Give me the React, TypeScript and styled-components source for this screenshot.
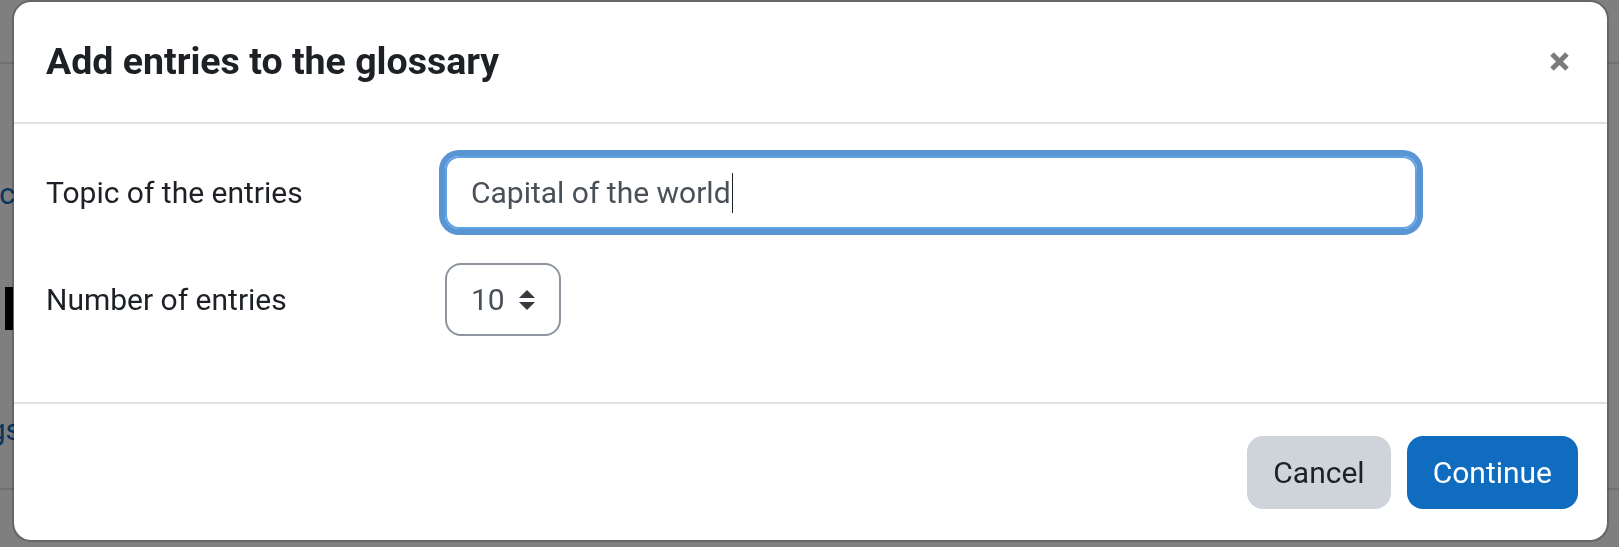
import styled, { createGlobalStyle } from 'styled-components'
import { FC } from 'react'

const GlobalStyle = createGlobalStyle`
  html, body {
    margin: 0;
    padding: 0;
  }
  body {
    width: 1619px;
    height: 547px;
    overflow: hidden;
    background: #fff;
    font-family: Roboto, "Liberation Sans", sans-serif;
    color: #1d2125;
  }
`

// page behind the backdrop, only its edges peek out
const Page = styled.div`
  display: flex;
  flex-direction: column;
  height: 547px;
`

const TopBar = styled.div`
  height: 62px;
  border-bottom: 2px solid #dee2e6;
`

const Middle = styled.div`
  display: flex;
  height: 424px;
`

const SideEdge = styled.div`
  width: 21px;
  overflow: hidden;
  display: flex;
  flex-direction: column;
  align-items: flex-end;
  padding-top: 107px;
`

const PageLink = styled.span<{ $inset?: number }>`
  white-space: nowrap;
  margin-right: ${(p) => p.$inset ?? 0}px;
  font-size: 30px;
  line-height: 45px;
  color: #0f6cbf;
`

const HeadingBar = styled.div`
  width: 8px;
  height: 43px;
  margin: 71px 8px 77px 0;
  background: #000;
`

const BottomLine = styled.div`
  border-top: 2px solid #dee2e6;
`

const Backdrop = styled.div`
  position: fixed;
  inset: 0;
  background: rgba(0, 0, 0, 0.5);
`

const DialogLayer = styled.div`
  position: fixed;
  inset: 0;
  display: flex;
  align-items: flex-start;
  padding: 0 10px 0 12px;
`

const ModalContent = styled.div`
  flex: 1;
  display: flex;
  flex-direction: column;
  background: #fff;
  background-clip: padding-box;
  border: 2px solid rgba(0, 0, 0, 0.2);
  border-radius: 19px;
`

const ModalHeader = styled.div`
  display: flex;
  align-items: center;
  justify-content: space-between;
  padding: 37px 32px 38px;
  border-bottom: 2px solid #dee2e6;
`

const ModalTitle = styled.h5`
  margin: 0;
  font-size: 37.5px;
  font-weight: 700;
  line-height: 45px;
  color: #1d2125;
`

const CloseButton = styled.button`
  display: flex;
  padding: 0;
  margin-right: 5px;
  border: 0;
  background: none;
  color: #7b7b7b;
  cursor: pointer;
`

const ModalBody = styled.div`
  padding: 32px 32px 32px;
`

const FormRow = styled.div`
  display: grid;
  grid-template-columns: 399px 1fr;
  align-items: center;
  margin-bottom: 34px;
`

const Label = styled.label`
  font-size: 30px;
  line-height: 45px;
  color: #1d2125;
`

const TextField = styled.div`
  display: flex;
  align-items: center;
  box-sizing: border-box;
  width: 972px;
  height: 73px;
  padding: 12px 24px;
  border: 2px solid #5ea3e6;
  border-radius: 14px;
  box-shadow: 0 0 0 6px #5994d3;
  font-size: 30px;
  line-height: 45px;
  color: #495057;
`

const Caret = styled.span`
  width: 1px;
  height: 40px;
  margin-left: 1px;
  background: #1d2125;
`

const SelectBox = styled.div`
  display: flex;
  align-items: center;
  justify-content: space-between;
  box-sizing: border-box;
  width: 116px;
  height: 73px;
  padding: 12px 24px;
  border: 2px solid #8f959e;
  border-radius: 16px;
  font-size: 30px;
  line-height: 45px;
  color: #495057;
`

const ModalFooter = styled.div`
  display: flex;
  justify-content: flex-end;
  gap: 16px;
  padding: 32px 29px 31px;
  border-top: 2px solid #dee2e6;
`

const Button = styled.button<{ $primary?: boolean }>`
  height: 73px;
  padding: 12px 24px;
  border: 2px solid transparent;
  border-radius: 16px;
  font-family: inherit;
  font-size: 30px;
  line-height: 45px;
  background: ${(p) => (p.$primary ? '#0f6cbf' : '#ced4da')};
  color: ${(p) => (p.$primary ? '#fff' : '#1d2125')};
  cursor: pointer;
`

const CloseIcon: FC = () => (
  <svg width="21" height="21" viewBox="0 0 21 21">
    <path d="M3 3L18 18M18 3L3 18" stroke="currentColor" strokeWidth="5" />
  </svg>
)

const SortArrows: FC = () => (
  <svg width="16" height="20" viewBox="0 0 4 5">
    <path fill="#343a40" d="M2 0L0 2h4zm0 5L0 3h4z" />
  </svg>
)

export default function App() {
  return (
    <>
      <GlobalStyle />
      <Page>
        <TopBar />
        <Middle>
          <SideEdge>
            <PageLink $inset={6}>Topic</PageLink>
            <HeadingBar />
            <PageLink>Settings</PageLink>
          </SideEdge>
        </Middle>
        <BottomLine />
      </Page>
      <Backdrop />
      <DialogLayer>
        <ModalContent role="dialog">
          <ModalHeader>
            <ModalTitle>Add entries to the glossary</ModalTitle>
            <CloseButton aria-label="Close">
              <CloseIcon />
            </CloseButton>
          </ModalHeader>
          <ModalBody>
            <FormRow>
              <Label>Topic of the entries</Label>
              <TextField>
                Capital of the world
                <Caret />
              </TextField>
            </FormRow>
            <FormRow>
              <Label>Number of entries</Label>
              <SelectBox>
                10
                <SortArrows />
              </SelectBox>
            </FormRow>
          </ModalBody>
          <ModalFooter>
            <Button>Cancel</Button>
            <Button $primary>Continue</Button>
          </ModalFooter>
        </ModalContent>
      </DialogLayer>
    </>
  )
}
